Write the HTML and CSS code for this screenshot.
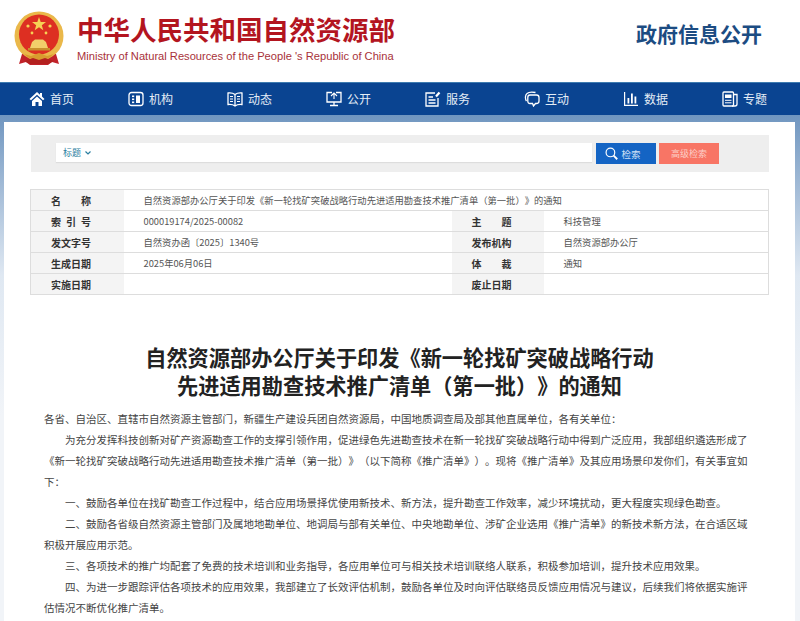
FILE: index.html
```html
<!DOCTYPE html>
<html lang="zh-CN">
<head>
    <meta charset="UTF-8">
    <title>自然资源部办公厅关于印发《新一轮找矿突破战略行动先进适用勘查技术推广清单（第一批）》的通知</title>
    <link rel="stylesheet" href="styles.css">
</head>
<body>
<div class="page">

    <!-- Logo and site name -->
    <header class="header">
        <svg class="emblem" width="52" height="56" viewBox="0 0 52 56">
            <path d="M9 43 L6 53 L13 51 L17 54 L35 54 L39 51 L46 53 L43 43 Z" fill="#c2222a"/>
            <circle cx="26" cy="25" r="24.5" fill="#eab84a"/>
            <circle cx="26" cy="23.5" r="20" fill="#dd2f22"/>
            <polygon points="26,6 27.7,11 33,11 28.8,14.2 30.3,19.2 26,16.2 21.7,19.2 23.2,14.2 19,11 24.3,11" fill="#f6d255"/>
            <circle cx="15" cy="15" r="1.6" fill="#f6d255"/>
            <circle cx="37" cy="15" r="1.6" fill="#f6d255"/>
            <circle cx="19" cy="22" r="1.4" fill="#f6d255"/>
            <circle cx="33" cy="22" r="1.4" fill="#f6d255"/>
            <path d="M19 31 L22 28.5 L30 28.5 L33 31 L35 37 L17 37 Z" fill="#f2cf6a"/>
            <rect x="15" y="37" width="22" height="2.5" fill="#c9902c"/>
            <path d="M8 38 C12 47 20 49 26 49 C32 49 40 47 44 38 L41 43 L34 45 L26 42 L18 45 L11 43 Z" fill="#d99b2e"/>
            <path d="M11 50 L20 47 L26 49 L32 47 L41 50 L35 53 L17 53 Z" fill="#b3211f"/>
        </svg>
        <div class="site-name">
            <h1>中华人民共和国自然资源部</h1>
            <p>Ministry of Natural Resources of the People 's Republic of China</p>
        </div>
        <div class="header-title">政府信息公开</div>
    </header>

    <!-- Main nav -->
    <nav class="nav">
        <a class="nav-item">
            <svg width="16" height="16" viewBox="0 0 16 16"><path d="M8 1 L0.5 8 L2 9.3 L8 3.8 L14 9.3 L15.5 8 L13 5.6 L13 2 L11 2 L11 3.8 Z" fill="#fff"/><path d="M3 10 L8 5.4 L13 10 L13 15 L9.5 15 L9.5 11 L6.5 11 L6.5 15 L3 15 Z" fill="#fff"/></svg>
            首页
        </a>
        <a class="nav-item">
            <svg class="line" width="16" height="16" viewBox="0 0 16 16"><rect x="1" y="1.5" width="14" height="13" rx="2.5"/><rect x="4" y="4.5" width="2.2" height="1.6" fill="#fff" stroke="none"/><rect x="4" y="7.5" width="2.2" height="1.6" fill="#fff" stroke="none"/><rect x="4" y="10.5" width="2.2" height="1.6" fill="#fff" stroke="none"/><rect x="8" y="4.5" width="4" height="7.5" fill="#fff" stroke="none"/></svg>
            机构
        </a>
        <a class="nav-item">
            <svg class="line" width="16" height="16" viewBox="0 0 16 16"><path d="M8 3.5 C6 2 3.5 1.7 1 2 L1 13.5 C3.5 13.2 6 13.5 8 15 C10 13.5 12.5 13.2 15 13.5 L15 2 C12.5 1.7 10 2 8 3.5 Z M8 3.5 L8 15"/><path d="M3 5.5 L6 5.5 M3 8 L6 8 M3 10.5 L6 10.5 M10 5.5 L13 5.5 M10 8 L13 8 M10 10.5 L13 10.5" stroke-width="1"/></svg>
            动态
        </a>
        <a class="nav-item">
            <svg class="line" width="16" height="16" viewBox="0 0 16 16"><path d="M6 1.5 L1 1.5 L1 11 L15 11 L15 1.5 L10 1.5"/><path d="M5 5 L8 2 L11 5 M8 2 L8 8" stroke-width="1.1"/><path d="M8 11 L8 14 M4 14.5 L12 14.5"/></svg>
            公开
        </a>
        <a class="nav-item">
            <svg class="line" width="16" height="16" viewBox="0 0 16 16"><path d="M10 2 L1 2 L1 15 L13 15 L13 7"/><path d="M3.5 6 L8 6 M3.5 9 L10.5 9 M3.5 12 L10.5 12"/><path d="M11 5.5 L14.5 1.5" stroke-width="2.2"/></svg>
            服务
        </a>
        <a class="nav-item">
            <svg class="line" width="16" height="16" viewBox="0 0 16 16"><path d="M2.5 10 C1 8 1 4 3 2.5 C4.5 1.2 9 1 11.5 1.5"/><path d="M6 4 L12.5 4 C14 4 15 5 15 6.5 L15 10 C15 11.5 14 12.5 12.5 12.5 L11.5 12.5 L9.5 15 L8.5 12.5 L6 12.5 C4.5 12.5 3.8 11.5 3.8 10 L3.8 6.5 C3.8 5 4.5 4 6 4 Z"/></svg>
            互动
        </a>
        <a class="nav-item">
            <svg width="16" height="16" viewBox="0 0 16 16"><path d="M1 1 L2.2 1 L2.2 13.8 L15 13.8 L15 15 L1 15 Z M4.5 7 L6.3 7 L6.3 12.5 L4.5 12.5 Z M8 2.5 L9.8 2.5 L9.8 12.5 L8 12.5 Z M11.5 5.5 L13.3 5.5 L13.3 12.5 L11.5 12.5 Z" fill="#fff"/></svg>
            数据
        </a>
        <a class="nav-item">
            <svg class="line" width="16" height="16" viewBox="0 0 16 16"><rect x="1" y="1" width="10.5" height="14" rx="1"/><path d="M11.5 3.5 L15 3.5 L15 13 C15 14.2 14 15 13 15 L10 15"/><rect x="3" y="3.5" width="6.5" height="3.5" fill="#fff" stroke="none"/><path d="M3 9.3 L9.5 9.3 M3 11.8 L9.5 11.8" stroke-width="1"/></svg>
            专题
        </a>
    </nav>

    <div class="main">
        <div class="panel">

            <!-- Search bar -->
            <div class="search">
                <div class="search-input">
                    <span class="search-type">标题</span>
                    <svg width="6" height="4" viewBox="0 0 6 4"><path d="M0.5 0.5 L3 3 L5.5 0.5" fill="none" stroke="#2a7ea0" stroke-width="1.2"/></svg>
                </div>
                <a class="btn btn-search">
                    <svg width="13" height="13" viewBox="0 0 12 12"><circle cx="5" cy="5" r="4" fill="none" stroke="#fff" stroke-width="1.1"/><path d="M8 8 L11.3 11.3" stroke="#fff" stroke-width="1.7"/></svg>
                    检索
                </a>
                <a class="btn btn-advanced">高级检索</a>
            </div>

            <!-- Document info -->
            <table class="info">
                <colgroup>
                    <col class="col-label">
                    <col class="col-value">
                    <col class="col-label2">
                    <col>
                </colgroup>
                <tr>
                    <th><span class="label">名称</span></th>
                    <td colspan="3">自然资源部办公厅关于印发《新一轮找矿突破战略行动先进适用勘查技术推广清单（第一批）》的通知</td>
                </tr>
                <tr>
                    <th><span class="label">索引号</span></th>
                    <td>000019174/2025-00082</td>
                    <th><span class="label">主题</span></th>
                    <td>科技管理</td>
                </tr>
                <tr>
                    <th><span class="label">发文字号</span></th>
                    <td>自然资办函〔2025〕1340号</td>
                    <th><span class="label">发布机构</span></th>
                    <td>自然资源部办公厅</td>
                </tr>
                <tr>
                    <th><span class="label">生成日期</span></th>
                    <td>2025年06月06日</td>
                    <th><span class="label">体裁</span></th>
                    <td>通知</td>
                </tr>
                <tr>
                    <th><span class="label">实施日期</span></th>
                    <td></td>
                    <th><span class="label">废止日期</span></th>
                    <td></td>
                </tr>
            </table>

            <!-- Article -->
            <h2 class="title">自然资源部办公厅关于印发《新一轮找矿突破战略行动<br>先进适用勘查技术推广清单（第一批）》的通知</h2>
            <div class="article">
                <p class="no-indent">各省、自治区、直辖市自然资源主管部门，新疆生产建设兵团自然资源局，中国地质调查局及部其他直属单位，各有关单位：</p>
                <p>为充分发挥科技创新对矿产资源勘查工作的支撑引领作用，促进绿色先进勘查技术在新一轮找矿突破战略行动中得到广泛应用，我部组织遴选形成了《新一轮找矿突破战略行动先进适用勘查技术推广清单（第一批）》（以下简称《推广清单》）。现将《推广清单》及其应用场景印发你们，有关事宜如下：</p>
                <p>一、鼓励各单位在找矿勘查工作过程中，结合应用场景择优使用新技术、新方法，提升勘查工作效率，减少环境扰动，更大程度实现绿色勘查。</p>
                <p>二、鼓励各省级自然资源主管部门及属地地勘单位、地调局与部有关单位、中央地勘单位、涉矿企业选用《推广清单》的新技术新方法，在合适区域积极开展应用示范。</p>
                <p>三、各项技术的推广均配套了免费的技术培训和业务指导，各应用单位可与相关技术培训联络人联系，积极参加培训，提升技术应用效果。</p>
                <p>四、为进一步跟踪评估各项技术的应用效果，我部建立了长效评估机制，鼓励各单位及时向评估联络员反馈应用情况与建议，后续我们将依据实施评估情况不断优化推广清单。</p>
            </div>

        </div>
    </div>
</div>
</body>
</html>
```

FILE: styles.css
```css
/* Basic styling for the page */
html, body {
    margin: 0;
    background: #fff;
}

body {
    font-family: "Noto Sans CJK SC", "Liberation Sans", sans-serif;
    color: #333;
    text-spacing-trim: space-all;
    font-kerning: none;
}

.page {
    height: 621px;
    overflow: hidden;
}

/* Header */
.header {
    display: flex;
    align-items: flex-start;
    height: 82px;
    padding: 0 38px 0 13px;
    box-sizing: border-box;
}

.emblem {
    margin-top: 11px;
    flex: none;
}

.site-name {
    margin-left: 12px;
    padding-top: 12px;
}

.site-name h1 {
    margin: 0;
    font-size: 26.5px;
    line-height: 34px;
    font-weight: 700;
    color: #b3151f;
    white-space: nowrap;
}

.site-name p {
    margin: 1px 0 0;
    font-family: "Liberation Sans", sans-serif;
    font-size: 11.15px;
    line-height: 18px;
    color: #a8323a;
    white-space: nowrap;
}

.header-title {
    margin-left: auto;
    padding-top: 17px;
    font-size: 21px;
    line-height: 32px;
    font-weight: 700;
    color: #1c4c82;
}

/* Nav */
.nav {
    display: flex;
    height: 32px;
    padding-left: 29px;
    background: #0a4491;
    border-top: 1px solid #3d7bb0;
}

.nav-item {
    display: flex;
    align-items: center;
    gap: 5px;
    width: 99px;
    flex: none;
    padding-bottom: 1px;
    box-sizing: border-box;
    font-size: 12px;
    color: #e4edf6;
}

.line {
    fill: none;
    stroke: #fff;
    stroke-width: 1.3;
}

/* Content panel */
.main {
    padding: 7px 5px 0 4px;
    background: linear-gradient(#7096c0, #dfe8f2 160px, #f1f4f8 300px);
}

.panel {
    height: 499px;
    padding: 13px 26px 0;
    background: #fff;
}

/* Search bar */
.search {
    display: flex;
    align-items: flex-start;
    height: 37px;
    margin: 0 0 17px 1px;
    padding: 8px 0 0 25px;
    box-sizing: border-box;
    background: #eee;
}

.search-input {
    display: flex;
    align-items: center;
    gap: 4px;
    width: 529px;
    height: 19px;
    padding-left: 7px;
    background: #fff;
    box-shadow: 0 1px 1px #ddd;
}

.search-type {
    font-size: 9px;
    color: #2a7ea0;
}

.btn {
    display: flex;
    align-items: center;
    justify-content: center;
    width: 60px;
    height: 21px;
    box-sizing: border-box;
    font-size: 9px;
}

.btn-search {
    gap: 3px;
    margin-left: 4px;
    padding-right: 6px;
    font-size: 9.5px;
    background: #1464c4;
    color: #cfe0f5;
}

.btn-advanced {
    margin-left: 3px;
    background: #f87565;
    color: #fcd0c8;
}

/* Info table */
.info {
    width: 739px;
    border-collapse: collapse;
    table-layout: fixed;
    font-size: 9.3px;
    color: #555;
}

.col-label {
    width: 93px;
}

.col-value {
    width: 328px;
}

.col-label2 {
    width: 92px;
}

.info th,
.info td {
    height: 20px;
    padding: 0 0 0 20px;
    border-top: 1px solid #ddd;
    border-bottom: 1px solid #ddd;
    text-align: left;
    white-space: nowrap;
}

.info tr > :first-child {
    border-left: 1px solid #ddd;
}

.info tr > :last-child {
    border-right: 1px solid #ddd;
}

.info th {
    background: #f4f4f4;
    font-size: 10px;
    font-weight: 700;
    color: #333;
}

.label {
    display: block;
    width: 40px;
    text-align-last: justify;
}

/* Article */
.title {
    margin: 48px 0 9px;
    font-size: 21.2px;
    line-height: 28px;
    font-weight: 700;
    text-align: center;
    color: #222;
}

.article {
    padding: 0 19px 0 14px;
    font-size: 10.5px;
    line-height: 21px;
    color: #444;
}

.article p {
    margin: 0;
    text-indent: 2em;
}

.article .no-indent {
    text-indent: 0;
}
```
